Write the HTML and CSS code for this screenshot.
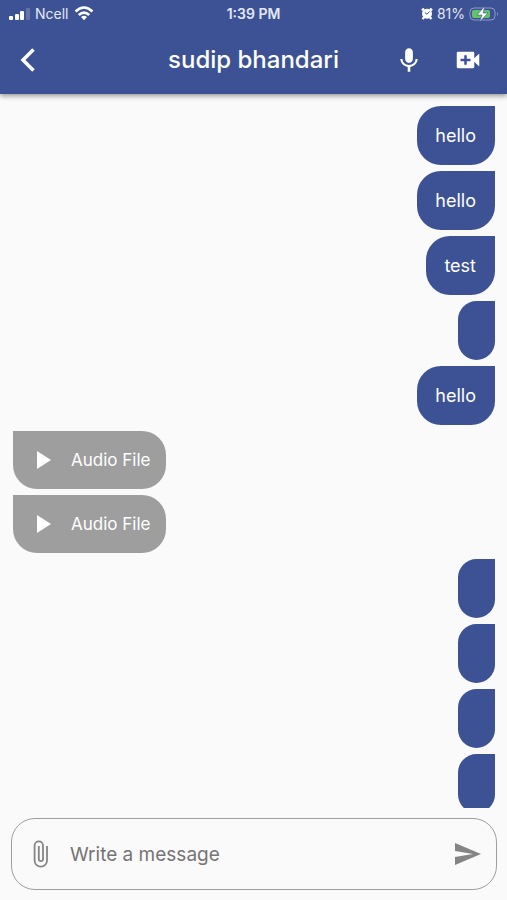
FILE: index.html
```
<!DOCTYPE html>
<html lang="en">
<head>
    <meta charset="UTF-8">
    <meta name="viewport" content="width=device-width, initial-scale=1.0">
    <title>sudip bhandari</title>
    <link rel="stylesheet" href="styles.css">
</head>
<body>
    <header class="top">
        <div class="status">
            <div class="status-left">
                <svg width="22" height="14" viewBox="0 0 22 14" fill="#fff">
                    <rect x="1" y="9" width="4" height="4" rx="1"/>
                    <rect x="7" y="7" width="4" height="6" rx="1"/>
                    <rect x="12" y="4" width="4" height="9" rx="1"/>
                    <rect x="18" y="1" width="4" height="12" rx="1" opacity=".2"/>
                </svg>
                <span>Ncell</span>
                <svg width="20" height="15" viewBox="0 0 20 15" fill="none" stroke="#fff" stroke-width="2.600">
                    <path d="M1.500 5.500Q10-2.500 18.500 5.500M4.800 9Q10 4.200 15.200 9"/>
                    <path d="M7 11Q10 8.600 13 11L10 14.200z" fill="#fff" stroke="none"/>
                </svg>
            </div>
            <span class="time">1:39 PM</span>
            <div class="status-right">
                <svg width="12" height="13" viewBox="0 0 12 13">
                    <path d="M1 3.500L3 1.500M11 3.500L9 1.500M3 10.500L1.500 12M9 10.500l1.500 1.500" stroke="#fff" stroke-width="2.400"/>
                    <circle cx="6" cy="6.700" r="5" fill="#fff"/>
                    <path d="M6 7.200L3.800 5.500M6 7.200L8.500 4.500" stroke="#3d5294" fill="none"/>
                </svg>
                <span>81%</span>
                <svg width="30" height="16" viewBox="0 0 30 16">
                    <rect x="1" y="2" width="25" height="12" rx="4" fill="none" stroke="#8d9ac4"/>
                    <path d="M28 6q2 2 0 4z" fill="#8d9ac4"/>
                    <rect x="3" y="4" width="18" height="8" rx="2" fill="#62c466"/>
                    <path d="M16 0L8 9h5l-2.500 7 8.500-9h-5z" fill="#fff" stroke="#3d5294" stroke-width=".6"/>
                </svg>
            </div>
        </div>
        <div class="bar">
            <button class="icon-btn" aria-label="Back">
                <svg width="24" height="28" viewBox="0 0 24 28" fill="none" stroke="#fff" stroke-width="3.500"><path d="M17.500 3.500L7 14l10.500 10.500"/></svg>
            </button>
            <h1 class="title">sudip bhandari</h1>
            <div class="actions">
                <button class="icon-btn" aria-label="Record audio">
                    <svg width="28" height="28" viewBox="0 0 24 24" fill="#fff"><path d="M12 14.500c1.900 0 3.300-1.500 3.300-3.300V5.300C15.300 3.500 13.900 2 12 2S8.700 3.500 8.700 5.300v5.900c0 1.800 1.400 3.300 3.300 3.300zM17.600 11.200c0 3-2.700 5.100-5.600 5.100s-5.600-2.100-5.600-5.100H4.600c0 3.400 2.900 6.200 6.300 6.800V22h2.200v-4c3.400-.6 6.300-3.400 6.300-6.800z"/></svg>
                </button>
                <button class="icon-btn" aria-label="Video call">
                    <svg width="30" height="28" viewBox="0 0 24 24" preserveAspectRatio="none" fill="#fff"><path fill-rule="evenodd" d="M17 10.500V6c0-.55-.45-1-1-1H4c-.55 0-1 .45-1 1v12c0 .55.45 1 1 1h12c.55 0 1-.45 1-1v-4.500l4 4v-11zM14 13h-3v3H9v-3H6v-2h3V8h2v3h3z"/></svg>
                </button>
            </div>
        </div>
    </header>

    <main class="chat">
        <div class="msg sent">hello</div>
        <div class="msg sent">hello</div>
        <div class="msg sent">test</div>
        <div class="msg sent"></div>
        <div class="msg sent">hello</div>
        <button class="msg received">
            <svg width="14" height="18" viewBox="0 0 14 18" fill="#fff"><path d="M0 0v18l14-9z"/></svg>
            Audio File
        </button>
        <button class="msg received">
            <svg width="14" height="18" viewBox="0 0 14 18" fill="#fff"><path d="M0 0v18l14-9z"/></svg>
            Audio File
        </button>
        <div class="msg sent"></div>
        <div class="msg sent"></div>
        <div class="msg sent"></div>
        <div class="msg sent"></div>
    </main>

    <form class="composer">
        <button type="button" class="icon-btn" aria-label="Attach file">
            <svg width="16" height="28" viewBox="0 0 16 28" fill="none" stroke="#858585" stroke-width="1.800"><path d="M14 6v14.500a6.200 6.200 0 0 1-12.400 0V5.500a4.200 4.200 0 0 1 8.400 0V19a2.100 2.100 0 0 1-4.200 0V6"/></svg>
        </button>
        <input class="text" type="text" placeholder="Write a message" aria-label="Write a message">
        <button type="submit" class="icon-btn" aria-label="Send">
            <svg width="26" height="22" viewBox="0 0 26 22" fill="#858585"><path d="M0 0v8l18 3-18 3v8l26-11z"/></svg>
        </button>
    </form>
</body>
</html>
```
FILE: styles.css
```
* { box-sizing: border-box; }
body { margin: 0; height: 100vh; display: flex; flex-direction: column; background-color: #fafafa; font-family: Inter, "Liberation Sans", sans-serif; }
button { border: none; padding: 0; background: none; font-family: inherit; cursor: pointer; }
svg { display: block; flex: none; }

/* header */
.top { flex: none; background-color: #3d5294; color: white; box-shadow: 0 2px 5px rgba(0, 0, 0, 0.4); z-index: 1; }
.status { display: grid; grid-template-columns: 1fr auto 1fr; align-items: center; height: 27px; padding: 0 8px; font-size: 14px; color: #e4e8f4; }
.status-left, .status-right { display: flex; align-items: center; gap: 5px; }
.status-right { justify-content: flex-end; gap: 4px; }
.time { font-weight: 600; }
.bar { display: grid; grid-template-columns: 1fr auto 1fr; align-items: center; height: 67px; padding: 0 16px 2px; }
.title { margin: 0; font-size: 24px; font-weight: 500; line-height: 32px; }
.actions { display: flex; justify-content: flex-end; gap: 30px; padding-right: 8px; }

/* messages */
.chat { flex: 1; min-height: 0; overflow-y: auto; scrollbar-width: none; display: flex; flex-direction: column; gap: 6px; padding: 12px 12px 0 13px; }
.msg { flex: none; display: flex; align-items: center; font-size: 18px; color: white; }
.sent { align-self: flex-end; height: 59px; padding: 0 19px 0 18px; background-color: #3d5294; border-radius: 24px 0 24px 24px; }
.received { align-self: flex-start; height: 58px; gap: 20px; padding: 0 16px 0 24px; font-size: 17px; background-color: #9e9e9e; border-radius: 0 24px 24px 24px; }

/* message box */
.composer { flex: none; display: flex; align-items: center; gap: 21px; height: 72px; margin: 10px 10px 10px 11px; padding: 0 15px 0 21px; border: 1px solid #9e9e9e; border-radius: 24px; }
.text { flex: 1; min-width: 0; border: none; outline: none; padding: 0; background: none; font-family: inherit; font-size: 19px; color: #333; }
.text::placeholder { color: #757575; opacity: 1; }
```
